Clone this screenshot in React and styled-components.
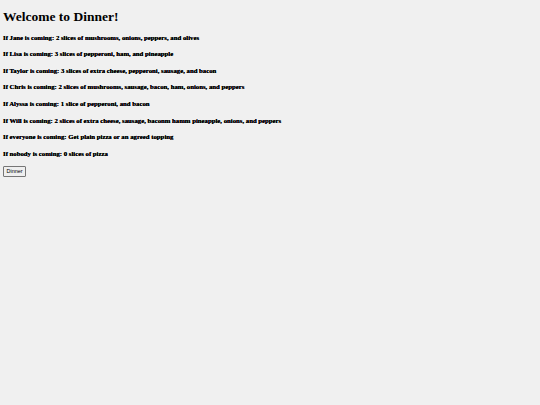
import React from 'react';
import styled, { createGlobalStyle } from 'styled-components';

const guests = [
  { who: 'Jane', order: '2 slices of mushrooms, onions, peppers, and olives' },
  { who: 'Lisa', order: '3 slices of pepperoni, ham, and pineapple' },
  { who: 'Taylor', order: '3 slices of extra cheese, pepperoni, sausage, and bacon' },
  { who: 'Chris', order: '2 slices of mushrooms, sausage, bacon, ham, onions, and peppers' },
  { who: 'Alyssa', order: '1 slice of pepperoni, and bacon' },
  { who: 'Will', order: '2 slices of extra cheese, sausage, baconm hamm pineapple, onions, and peppers' },
  { who: 'everyone', order: 'Get plain pizza or an agreed topping' },
  { who: 'nobody', order: '0 slices of pizza' },
];

const App = () => (
  <>
    <GlobalStyle />
    <Page>
      <Title>Welcome to Dinner!</Title>
      {guests.map((g) => (
        <Line key={g.who}>
          If {g.who} is coming: {g.order}
        </Line>
      ))}
      <DinnerButton type="button">Dinner</DinnerButton>
    </Page>
  </>
);

export default App;

const GlobalStyle = createGlobalStyle`
  html, body {
    margin: 0;
    background: #f0f0f0;
  }
  body {
    font-family: "Liberation Serif", "Times New Roman", serif;
    color: #000;
  }
`;

const Page = styled.div`
  padding: 9px 3px 0;
  display: flex;
  flex-direction: column;
  align-items: flex-start;
`;

const Title = styled.h1`
  font-size: 13.5px;
  font-weight: bold;
  line-height: 1.15;
  margin: 0 0 9px;
`;

const Line = styled.h4`
  font-size: 6.75px;
  font-weight: bold;
  line-height: 1.15;
  margin: 0 0 8.9px;
  text-shadow: 0 0 0.3px #000;
`;

const DinnerButton = styled.button`
  font-family: Arial, "Liberation Sans", sans-serif;
  font-size: 5.5px;
  padding: 1.2px 2.5px;
  margin-top: -0.5px;
  color: #000;
  background: #efefef;
  border: 1px solid #767676;
  border-radius: 1px;
  line-height: 1.15;
`;
